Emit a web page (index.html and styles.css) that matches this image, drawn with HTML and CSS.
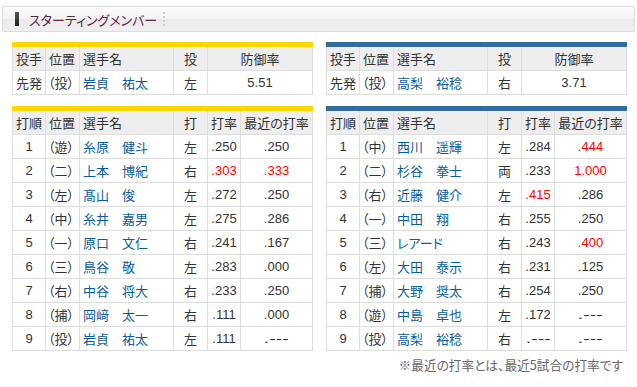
FILE: index.html
```html
<!DOCTYPE html>
<html lang="ja">
<head>
<meta charset="utf-8">
<title>スターティングメンバー</title>
<link rel="stylesheet" href="styles.css">
</head>
<body>
<div class="page">
  <div class="title-bar">
    <span class="marker"></span>
    <h2 class="title">スターティングメンバー</h2>
    <span class="dots"></span>
  </div>

  <div class="grid">
    <table class="tbl home">
      <colgroup><col class="c1"><col class="c2"><col class="c3"><col class="c4"><col class="c5"><col class="c6"></colgroup>
      <tr class="head"><th class="l">投手</th><th class="l">位置</th><th class="l">選手名</th><th>投</th><th colspan="2">防御率</th></tr>
      <tr><td class="l">先発</td><td class="pos">（投）</td><td class="name">岩貞　祐太</td><td>左</td><td colspan="2" class="num">5.51</td></tr>
    </table>
    <table class="tbl away">
      <colgroup><col class="c1"><col class="c2"><col class="c3"><col class="c4"><col class="c5"><col class="c6"></colgroup>
      <tr class="head"><th class="l">投手</th><th class="l">位置</th><th class="l">選手名</th><th>投</th><th colspan="2">防御率</th></tr>
      <tr><td class="l">先発</td><td class="pos">（投）</td><td class="name">高梨　裕稔</td><td>右</td><td colspan="2" class="num">3.71</td></tr>
    </table>

    <table class="tbl home">
      <colgroup><col class="c1"><col class="c2"><col class="c3"><col class="c4"><col class="c5"><col class="c6"></colgroup>
      <tr class="head"><th class="l">打順</th><th class="l">位置</th><th class="l">選手名</th><th>打</th><th>打率</th><th>最近の打率</th></tr>
      <tr><td class="num">1</td><td class="pos">（遊）</td><td class="name">糸原　健斗</td><td>左</td><td class="num">.250</td><td class="num">.250</td></tr>
      <tr><td class="num">2</td><td class="pos">（二）</td><td class="name">上本　博紀</td><td>右</td><td class="num red">.303</td><td class="num red">.333</td></tr>
      <tr><td class="num">3</td><td class="pos">（左）</td><td class="name">髙山　俊</td><td>左</td><td class="num">.272</td><td class="num">.250</td></tr>
      <tr><td class="num">4</td><td class="pos">（中）</td><td class="name">糸井　嘉男</td><td>左</td><td class="num">.275</td><td class="num">.286</td></tr>
      <tr><td class="num">5</td><td class="pos">（一）</td><td class="name">原口　文仁</td><td>右</td><td class="num">.241</td><td class="num">.167</td></tr>
      <tr><td class="num">6</td><td class="pos">（三）</td><td class="name">鳥谷　敬</td><td>左</td><td class="num">.283</td><td class="num">.000</td></tr>
      <tr><td class="num">7</td><td class="pos">（右）</td><td class="name">中谷　将大</td><td>右</td><td class="num">.233</td><td class="num">.250</td></tr>
      <tr><td class="num">8</td><td class="pos">（捕）</td><td class="name">岡﨑　太一</td><td>右</td><td class="num">.111</td><td class="num">.000</td></tr>
      <tr><td class="num">9</td><td class="pos">（投）</td><td class="name">岩貞　祐太</td><td>左</td><td class="num">.111</td><td class="num"><span class="blank">.---</span></td></tr>
    </table>
    <table class="tbl away">
      <colgroup><col class="c1"><col class="c2"><col class="c3"><col class="c4"><col class="c5"><col class="c6"></colgroup>
      <tr class="head"><th class="l">打順</th><th class="l">位置</th><th class="l">選手名</th><th>打</th><th>打率</th><th>最近の打率</th></tr>
      <tr><td class="num">1</td><td class="pos">（中）</td><td class="name">西川　遥輝</td><td>左</td><td class="num">.284</td><td class="num red">.444</td></tr>
      <tr><td class="num">2</td><td class="pos">（二）</td><td class="name">杉谷　拳士</td><td>両</td><td class="num">.233</td><td class="num red">1.000</td></tr>
      <tr><td class="num">3</td><td class="pos">（右）</td><td class="name">近藤　健介</td><td>左</td><td class="num red">.415</td><td class="num">.286</td></tr>
      <tr><td class="num">4</td><td class="pos">（一）</td><td class="name">中田　翔</td><td>右</td><td class="num">.255</td><td class="num">.250</td></tr>
      <tr><td class="num">5</td><td class="pos">（三）</td><td class="name">レアード</td><td>右</td><td class="num">.243</td><td class="num red">.400</td></tr>
      <tr><td class="num">6</td><td class="pos">（左）</td><td class="name">大田　泰示</td><td>右</td><td class="num">.231</td><td class="num">.125</td></tr>
      <tr><td class="num">7</td><td class="pos">（捕）</td><td class="name">大野　奨太</td><td>右</td><td class="num">.254</td><td class="num">.250</td></tr>
      <tr><td class="num">8</td><td class="pos">（遊）</td><td class="name">中島　卓也</td><td>左</td><td class="num">.172</td><td class="num"><span class="blank">.---</span></td></tr>
      <tr><td class="num">9</td><td class="pos">（投）</td><td class="name">高梨　裕稔</td><td>右</td><td class="num"><span class="blank">.---</span></td><td class="num"><span class="blank">.---</span></td></tr>
    </table>
  </div>
  <p class="note">※最近の打率とは、最近5試合の打率です</p>
</div>
</body>
</html>
```

FILE: styles.css
```css
html, body {
  margin: 0;
  padding: 0;
  background: #fff;
}
body {
  font-family: "Noto Sans CJK JP", "Noto Sans", sans-serif;
  color: #333;
  font-feature-settings: "palt";
}
.page {
  padding: 6px 2px 0 2px;
}
.title-bar {
  display: flex;
  align-items: center;
  height: 24px;
  border: 1px solid #dcdcdc;
  border-radius: 2px;
  background: linear-gradient(#fbfbfb 0%, #f3f3f3 50%, #ebebeb 52%, #efefef 100%);
  padding-left: 12px;
}
.marker {
  width: 4px;
  height: 14px;
  background: linear-gradient(#555, #222);
}
.title {
  margin: 0 0 0 10px;
  font-size: 13px;
  font-weight: normal;
  color: #5c2840;
  line-height: 1;
}
.dots {
  margin-left: 6px;
  height: 14px;
  border-left: 2px dotted #d0d0d0;
}
.grid {
  display: grid;
  grid-template-columns: 300px 300px;
  column-gap: 14px;
  row-gap: 11px;
  padding: 10px 0 0 10px;
}
.tbl {
  width: 300px;
  border-collapse: collapse;
  table-layout: fixed;
  font-size: 13px;
}
.tbl .c1 { width: 33px; }
.tbl .c2 { width: 34px; }
.tbl .c3 { width: 94px; }
.tbl .c4 { width: 34px; }
.tbl .c5 { width: 33px; }
.tbl .c6 { width: 72px; }
.tbl.home { border-top: 5px solid #ffd700; }
.tbl.away { border-top: 5px solid #336b9a; }
.tbl th, .tbl td {
  border: 1px solid #dedede;
  height: 23px;
  padding: 0;
  text-align: center;
  font-weight: normal;
  line-height: 1;
  white-space: nowrap;
  overflow: hidden;
}
.tbl tr.head th { background: #eeeeee; }
.tbl .l { text-align: left; padding-left: 3px; }
.tbl .pos { text-align: left; padding-left: 2px; }
.tbl .name { text-align: left; padding-left: 3px; color: #0b5c9e; }
.tbl .num {
  font-family: "Liberation Sans Narrow", "Liberation Sans", sans-serif;
  font-size: 13px;
}
.tbl .red { color: #ff0000; }
.blank {
  display: inline-block;
  transform: scaleX(1.5);
}
.note {
  margin: 4px 12px 0 0;
  text-align: right;
  font-size: 12.7px;
  color: #666;
}
```
